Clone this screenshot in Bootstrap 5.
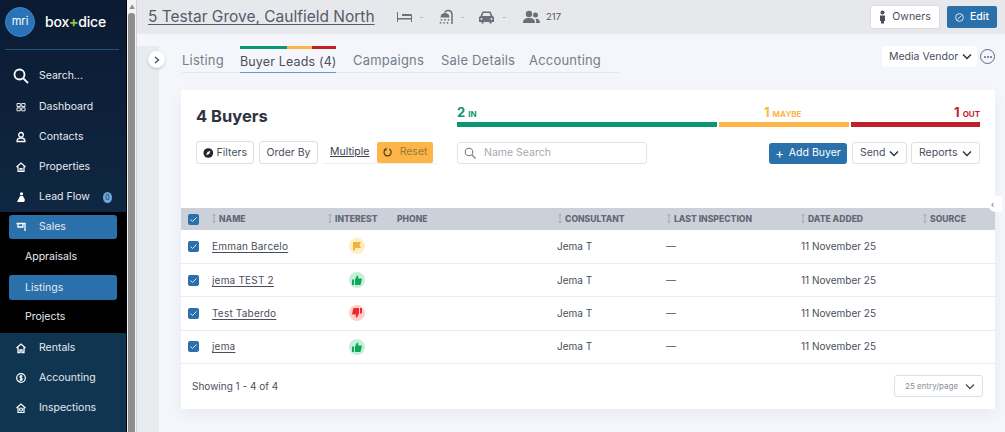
<!DOCTYPE html>
<html lang="en">
<head>
<meta charset="UTF-8">
<meta name="viewport" content="width=device-width, initial-scale=1.0">
<title>Buyer Leads</title>
<link href="https://cdn.jsdelivr.net/npm/bootstrap@5.3.0/dist/css/bootstrap.min.css" rel="stylesheet">
<style>
    html, body { height: 432px; overflow: hidden; }
    body { font-family: Inter, "Liberation Sans", sans-serif; font-size: 10.5px; color: #4a4f5c; background: #f4f6fb; }
    .shell { height: 432px; }
    .side { width: 126px; flex: none; color: #e6e9ef; background: #0b1a33; border-right: 1px solid #000; box-sizing: content-box; white-space: nowrap; }
    .side-top { height: 212px; background: linear-gradient(#0b1a33, #0f2742); }
    .side-mid { height: 121px; background: #000; padding-top: 3px; }
    .side-end { height: 99px; background: #0f3550; }
    .brand { height: 50px; margin: 0 7px 0 5px; padding-top: 7px; border-bottom: 1px solid #24527f; }
    .logo { width: 30px; height: 30px; border-radius: 50%; background: #2a73b8; border: 1px solid #3d86c6; color: #fff; font-size: 11px; line-height: 27px; text-align: center; }
    .brand-name { font-size: 14px; font-weight: 500; color: #fff; margin-left: 10px; letter-spacing: -.2px; }
    .brand-name b { color: #8cc63f; }
    .side-item { height: 30px; padding-left: 16px; gap: 13px; }
    .side-item svg { width: 10px; height: 12px; flex: none; }
    .side-search { height: 32px; margin-top: 10px; padding-left: 13px; gap: 10px; }
    .side-search svg { width: 16px; height: 16px; flex: none; }
    .count-dot { width: 11px; height: 11px; border-radius: 50%; background: #6ea8dc; font-size: 7px; line-height: 11px; text-align: center; color: #234; margin-left: auto; margin-right: 14px; }
    .side-pill { height: 24px; margin: 0 9px; padding-left: 7px; gap: 13px; background: #2a70ab; border-radius: 3px; }
    .side-pill svg { width: 10px; height: 12px; flex: none; }
    .side-sub { height: 36px; padding-left: 25px; }
    .side-sub.last-sub { height: 33px; }
    .side-pill.sub-pill { padding-left: 16px; height: 25px; }
    .scroll-rail { width: 10px; flex: none; background: #f3f3f3; border-right: 1px solid #cfd3d8; padding-left: 1px; }
    .scroll-up { height: 13px; color: #8e8e8e; font-size: 6px; line-height: 13px; text-align: center; }
    .scroll-thumb { width: 7px; height: 419px; background: #8e8e8e; border-radius: 3px 3px 0 0; }
    .main-area { min-width: 0; position: relative; }
    .top-strip { height: 34px; background: #e6e8ec; padding: 0 8px 0 11px; }
    .top-title { font-size: 15.5px; color: #565b68; text-decoration: underline; text-underline-offset: 2px; }
    .top-meta { gap: 7px; margin-left: 21px; color: #777; }
    .top-meta svg { width: 17px; height: 16px; flex: none; }
    .top-meta i { font-style: normal; color: #aaa; margin-right: 6px; font-size: 9px; }
    .top-meta .guests-icon { margin-left: 4px; }
    .top-btn { height: 22px; font-size: 10.5px; padding: 0 8px; border: 0; border-radius: 2px; gap: 6px; }
    .btn-light-owner { background: #fff; color: #4a4f5c; width: 68px; box-shadow: 0 0 2px rgba(0,0,0,.15); }
    .btn-edit { background: #2a70ab; color: #fff; width: 50px; font-weight: 500; }
    .body-wrap { height: 398px; }
    .left-strip { width: 22px; flex: none; margin-top: 12px; background: #e9ecef; }
    .expand-dot { position: absolute; left: 11px; top: 51px; width: 17px; height: 17px; border-radius: 50%; background: #fff; box-shadow: 0 1px 3px rgba(0,0,0,.2); color: #555; }
    .content-col { width: 836px; padding-left: 22px; }
    .tab-line { height: 38px; margin-top: 12px; }
    .tab-set { width: 437px; height: 27px; margin-left: 1px; border-bottom: 1px solid #e3e6ea; gap: 16px; font-size: 13px; letter-spacing: .2px; color: #777d8a; align-items: flex-end; white-space: nowrap; }
    .tab-one { height: 27px; line-height: 31px; position: relative; }
    .tab-on { color: #4a4f5c; border-bottom: 1px solid #5b9bd5; height: 27px; margin-bottom: -1px; margin-right: 1px; width: 96px; font-size: 12.5px; letter-spacing: .15px; }
    .tab-flags { position: absolute; top: 0; left: 0; right: 0; height: 3px; }
    .tab-flags span:nth-child(1) { width: 47px; background: #0b9672; }
    .tab-flags span:nth-child(2) { width: 25px; background: #fdb548; }
    .tab-flags span:nth-child(3) { width: 24px; background: #c01f2c; }
    .vendor-pick { width: 95px; height: 21px; background: #fff; border-radius: 3px; padding: 0 5px 0 7px; font-size: 10.5px; margin-right: 3px; }
    .more-dots { width: 15px; height: 15px; border: 1px solid #5e6a80; border-radius: 50%; color: #5e6a80; gap: 1px; }
    .more-dots span { width: 2px; height: 2px; background: #5e6a80; border-radius: 50%; }
    .sheet { height: 319px; margin-top: 6px; width: 814px; background: #fff; box-shadow: 0 6px 14px rgba(30,50,90,.06); border-radius: 2px; }
    .sheet-top { height: 118px; padding: 15px 15px 0; }
    .sheet-left { width: 261px; }
    .sheet-left h2 { font-size: 16.5px; font-weight: 700; color: #2f3340; margin: 1px 0 15px; line-height: 20px; }
    .sheet-right { width: 523px; }
    .tool-btn { height: 23px; padding: 0 6px; background: #fff; border: 1px solid #dcdfe4; border-radius: 3px; font-size: 10.5px; color: #4a4f5c; gap: 3px; }
    .multi-wrap { width: 114px; margin-left: 5px; padding-left: 7px; border-bottom: 1px solid #eef0f3; }
    .multi-link { color: #3d4150; text-decoration: underline; margin-right: 8px; }
    .reset-btn { width: 56px; height: 21px; background: #fdb548; color: #9a7a3c; border: 0; border-radius: 2px; gap: 7px; font-size: 10.5px; }
    .stat-line { height: 15px; font-size: 13px; font-weight: 700; line-height: 15px; }
    .stat-line small { font-size: 8px; margin-left: 3px; font-weight: 700; }
    .stat-bars { gap: 2px; height: 5px; margin-top: 2px; }
    .stat-green { color: #0b9672; }
    .stat-amber { color: #fdb548; }
    .stat-red { color: #c01f2c; }
    .stat-bars div { height: 5px; }
    .search-box { width: 190px; height: 22px; border: 1px solid #e0e3e8; border-radius: 3px; padding: 0 6px; gap: 8px; color: #a6aab2; font-size: 10.5px; }
    .add-btn { height: 21px; width: 78px; background: #2a70ab; color: #fff; border: 0; border-radius: 3px; gap: 5px; font-size: 10.5px; margin-right: 1px; }
    .chev { width: 10px; height: 7px; flex: none; }
    .buyers-table { table-layout: fixed; width: 814px; margin: 0; font-size: 10px; color: #4a4f5c; }
    .buyers-table th { height: 22px; padding: 0; background: #cbd0d9; color: #636876; font-size: 8.6px; font-weight: 800; text-transform: uppercase; border: 0; vertical-align: middle; white-space: nowrap; }
    .buyers-table td { height: 33.4px; padding: 0; border-bottom: 1px solid #e9ebef; vertical-align: middle; background: #fff; color: #4a4f5c; }
    .sort-mark { width: 6px; height: 11px; margin-right: 2px; vertical-align: -2px; }
    .tick-box { width: 11px; height: 11px; margin-left: 7px; background: #2a70ab; border-radius: 2px; display: block; }
    .tick-box svg { display: block; width: 11px; height: 11px; }
    .person-link { color: #4a4f5c; text-decoration: underline; text-underline-offset: 2px; letter-spacing: .2px; margin-left: 1px; }
    .mood-dot { width: 16px; height: 16px; border-radius: 50%; margin-left: 22px; }
    .mood-dot svg { width: 10px; height: 10px; }
    .mood-amber { background: #fdeec4; }
    .mood-green { background: #c6f0d6; }
    .mood-red { background: #ffcfcc; }
    .date-cell { padding-left: 1px !important; }
    .table-foot { height: 44px; padding: 0 12px 0 11px; font-size: 10px; }
    .page-pick { width: 89px; height: 22px; border: 1px solid #dcdfe4; border-radius: 3px; font-size: 8px; color: #8a8e98; padding: 0 7px 0 10px; white-space: nowrap; }
    .edge-handle { position: absolute; left: 851px; top: 196px; width: 14px; height: 16px; background: #fff; border-radius: 8px 0 0 8px; color: #555; font-size: 8px; line-height: 16px; padding-left: 3px; overflow: hidden; }
</style>
</head>
<body>
<div class="shell d-flex">
    <aside class="side">
        <div class="side-top">
            <div class="brand d-flex align-items-start">
                <div class="logo">mri</div>
                <div class="brand-name" style="line-height:30px">box<b>+</b>dice</div>
            </div>
            <div class="side-search d-flex align-items-center">
                <svg viewBox="0 0 16 16" fill="none" stroke="#fff" stroke-width="1.8"><circle cx="6.5" cy="6.5" r="5"/><path d="M10.3 10.3 15 15"/></svg>
                <span>Search...</span>
            </div>
            <div class="side-item d-flex align-items-center">
                <svg viewBox="0 0 10 12" fill="none" stroke="#e6e9ef"><path d="M1 2.500h3.300v3H1zM5.700 2.500H9v3H5.700zM1 6.800h3.300v3H1zM5.700 6.800H9v3H5.700z"/></svg>
                <span>Dashboard</span>
            </div>
            <div class="side-item d-flex align-items-center">
                <svg viewBox="0 0 10 12" fill="none" stroke="#fff" stroke-width="1.300"><circle cx="5" cy="3.800" r="2.300"/><path d="M1 10.500c0-2.600 1.500-3.500 4-3.500s4 .9 4 3.500z"/></svg>
                <span>Contacts</span>
            </div>
            <div class="side-item d-flex align-items-center">
                <svg viewBox="0 0 10 12" fill="none" stroke="#fff" stroke-width="1.200"><path d="M.5 6 5 2l4.500 4M2 5.500V10.500h6V5.500M4 10.500V7.500h2v3"/></svg>
                <span>Properties</span>
            </div>
            <div class="side-item d-flex align-items-center">
                <svg viewBox="0 0 10 12" fill="#fff"><circle cx="5.500" cy="2.800" r="1.600"/><path d="M4 5h3l2 4-1 2H1l1.500-3z"/></svg>
                <span>Lead Flow</span>
                <span class="count-dot">0</span>
            </div>
        </div>
        <div class="side-mid">
            <div class="side-pill d-flex align-items-center">
                <svg viewBox="0 0 10 12" fill="none" stroke="#fff" stroke-width="1.300"><path d="M.5 2.500h8.500V10M2 2.500V6h5V2.500"/></svg>
                <span>Sales</span>
            </div>
            <div class="side-sub d-flex align-items-center">Appraisals</div>
            <div class="side-pill sub-pill d-flex align-items-center">Listings</div>
            <div class="side-sub last-sub d-flex align-items-center">Projects</div>
        </div>
        <div class="side-end">
            <div class="side-item d-flex align-items-center">
                <svg viewBox="0 0 10 12" fill="none" stroke="#fff" stroke-width="1.300"><path d="M.5 6 5 2l4.500 4M2 5.500V10.500h2V8h2v2.500h2V5.500"/></svg>
                <span>Rentals</span>
            </div>
            <div class="side-item d-flex align-items-center">
                <svg viewBox="0 0 10 12" fill="none" stroke="#fff" stroke-width="1.200"><circle cx="5" cy="6" r="4.300"/><path d="M6.300 4.500C6 3.700 4 3.600 3.900 4.800 3.800 6 6.300 5.800 6.200 7.200 6.100 8.400 4 8.300 3.700 7.500M5 3v6"/></svg>
                <span>Accounting</span>
            </div>
            <div class="side-item d-flex align-items-center">
                <svg viewBox="0 0 10 12" fill="none" stroke="#fff" stroke-width="1.200"><path d="M.5 6 5 2l4.500 4M2 5.500V10.500h6V5.500"/><circle cx="5" cy="7.500" r="1.500"/></svg>
                <span>Inspections</span>
            </div>
        </div>
    </aside>
    <div class="scroll-rail">
        <div class="scroll-up">&#9650;</div>
        <div class="scroll-thumb"></div>
    </div>
    <div class="main-area flex-grow-1">
        <div class="top-strip d-flex align-items-center">
            <span class="top-title">5 Testar Grove, Caulfield North</span>
            <div class="top-meta d-flex align-items-center">
                <svg viewBox="0 0 17 16" fill="#6b7078"><path d="M1 3h1v6h13V7H6V5h8.500c1 0 1.500.6 1.500 1.500V13h-1v-2.500H2V13H1z"/></svg>
                <i>-</i>
                <svg viewBox="0 0 17 16" fill="#6b7078"><path d="M15 15V5.500a4 4 0 0 0-7.500-2" fill="none" stroke="#6b7078" stroke-width="1.500"/><path d="M3.500 8.500a4.500 4.500 0 0 1 9 0z"/><circle cx="4.500" cy="10.800" r=".9"/><circle cx="8" cy="10.800" r=".9"/><circle cx="11.500" cy="10.800" r=".9"/><circle cx="3.500" cy="13.800" r=".9"/><circle cx="7" cy="13.800" r=".9"/><circle cx="10.500" cy="13.800" r=".9"/></svg>
                <i>-</i>
                <svg viewBox="0 0 17 16" fill="#6b7078"><path d="M4.500 2.500h8L14.500 7l1.500 1v5h-2.500v1.500h-2V13h-6v1.500h-2V13H1V8l1.500-1zM5.500 4 4.300 7h8.400l-1.200-3zM3.500 9a1 1 0 1 0 0 2 1 1 0 0 0 0-2zm10 0a1 1 0 1 0 0 2 1 1 0 0 0 0-2z" fill-rule="evenodd"/></svg>
                <i>-</i>
                <svg class="guests-icon" viewBox="0 0 17 16" fill="#6b7078"><circle cx="6" cy="5" r="3.200"/><path d="M0 14c0-4 2.500-5 6-5s6 1 6 5z"/><circle cx="12.500" cy="6" r="2.500"/><path d="M13 14h4c0-3-1.500-4.500-4.500-4.300 1 1 .5 3 .5 4.300z"/></svg>
                <span style="font-size:9.5px;color:#555;margin-left:-1px">217</span>
            </div>
            <div class="ms-auto d-flex gap-2">
                <button class="top-btn btn-light-owner d-flex align-items-center justify-content-center">
                    <svg width="7" height="14" viewBox="0 0 7 14" fill="#4a4f5c"><circle cx="3.500" cy="2.500" r="2"/><path d="M1 5.500h5V11H5v2.500H2V11H1z"/></svg>
                    Owners
                </button>
                <button class="top-btn btn-edit d-flex align-items-center justify-content-center">
                    <svg width="13" height="13" viewBox="0 0 12 12" fill="none" stroke="#fff" stroke-width="1.100"><circle cx="6" cy="6" r="5.200"/><path d="M3.500 8.500 8.500 3.500"/></svg>
                    Edit
                </button>
            </div>
        </div>
        <div class="body-wrap d-flex">
            <div class="left-strip"></div>
            <div class="content-col">
                <div class="tab-line d-flex justify-content-between">
                    <div class="tab-set d-flex">
                        <div class="tab-one" style="width:42px">Listing</div>
                        <div class="tab-one tab-on">
                            <div class="tab-flags d-flex"><span></span><span></span><span></span></div>
                            Buyer Leads (4)
                        </div>
                        <div class="tab-one" style="width:72px">Campaigns</div>
                        <div class="tab-one" style="width:72px">Sale Details</div>
                        <div class="tab-one" style="width:73px">Accounting</div>
                    </div>
                    <div class="d-flex align-items-center" style="height:21px">
                        <div class="vendor-pick d-flex align-items-center justify-content-between">
                            <span>Media Vendor</span>
                            <svg class="chev" viewBox="0 0 10 7" fill="none" stroke="#2f3340" stroke-width="1.500"><path d="m1 1.500 4 4 4-4"/></svg>
                        </div>
                        <div class="more-dots d-flex align-items-center justify-content-center"><span></span><span></span><span></span></div>
                    </div>
                </div>
                <div class="sheet">
                    <div class="sheet-top d-flex justify-content-between">
                        <div class="sheet-left">
                            <h2>4 Buyers</h2>
                            <div class="d-flex align-items-center">
                                <button class="tool-btn d-flex align-items-center" style="width:58px">
                                    <svg width="12" height="12" viewBox="0 0 12 12"><circle cx="6" cy="6" r="5.500" fill="#23262f"/><path d="m3.500 8.500 1.500-3.500 3.500-1.500L7 7z" fill="#fff"/></svg>
                                    Filters
                                </button>
                                <button class="tool-btn justify-content-center" style="width:59px;margin-left:5px">Order By</button>
                                <div class="multi-wrap d-flex align-items-center">
                                    <span class="multi-link">Multiple</span>
                                    <button class="reset-btn d-flex align-items-center justify-content-center">
                                        <svg width="11" height="12" viewBox="0 0 11 12" fill="none" stroke="#4a3a1c" stroke-width="1.400"><path d="M3.500 2.500a4.300 4.300 0 1 0 4 0M3.500 1v2.500H1"/></svg>
                                        Reset
                                    </button>
                                </div>
                            </div>
                        </div>
                        <div class="sheet-right">
                            <div class="stat-line d-flex">
                                <div class="stat-green" style="width:260px">2<small>IN</small></div>
                                <div class="stat-amber" style="width:132px;padding-left:47px">1<small>MAYBE</small></div>
                                <div class="stat-red text-end flex-grow-1">1<small>OUT</small></div>
                            </div>
                            <div class="stat-bars d-flex">
                                <div style="width:260px;background:#0b9672"></div>
                                <div style="width:130px;background:#fdb548"></div>
                                <div class="flex-grow-1" style="background:#c01f2c"></div>
                            </div>
                            <div class="d-flex align-items-center" style="margin-top:15px">
                                <div class="search-box d-flex align-items-center">
                                    <svg width="12" height="12" viewBox="0 0 12 12" fill="none" stroke="#777" stroke-width="1.100"><circle cx="5" cy="5" r="3.800"/><path d="m8 8 3.500 3.500"/></svg>
                                    <span>Name Search</span>
                                </div>
                                <button class="add-btn ms-auto d-flex align-items-center justify-content-center">
                                    <span style="font-size:13px;line-height:1">+</span>Add Buyer
                                </button>
                                <button class="tool-btn ms-1 d-flex align-items-center justify-content-between" style="width:55px;height:22px;padding:0 7px">
                                    Send
                                    <svg class="chev" viewBox="0 0 10 7" fill="none" stroke="#2f3340" stroke-width="1.400"><path d="m1 1.500 4 4 4-4"/></svg>
                                </button>
                                <button class="tool-btn ms-1 d-flex align-items-center justify-content-between" style="width:69px;height:22px;padding:0 7px">
                                    Reports
                                    <svg class="chev" viewBox="0 0 10 7" fill="none" stroke="#2f3340" stroke-width="1.400"><path d="m1 1.500 4 4 4-4"/></svg>
                                </button>
                            </div>
                        </div>
                    </div>
                    <table class="table buyers-table">
                        <colgroup>
                            <col style="width:30px"><col style="width:116px"><col style="width:70px"><col style="width:160px"><col style="width:109px"><col style="width:134px"><col style="width:122px"><col style="width:73px">
                        </colgroup>
                        <thead>
                            <tr>
                                <th><span class="tick-box"><svg viewBox="0 0 11 11" fill="none" stroke="#dfe9f3" stroke-width="1"><path d="m2.500 5.500 2 2 4-4"/></svg></span></th>
                                <th><svg class="sort-mark" viewBox="0 0 6 11" fill="none" stroke="#a4a9b4"><path d="M3 1v9M1.500 2.500 3 1l1.500 1.500M1.500 8.500 3 10l1.500-1.500"/></svg>Name</th>
                                <th><svg class="sort-mark" viewBox="0 0 6 11" fill="none" stroke="#a4a9b4"><path d="M3 1v9M1.500 2.500 3 1l1.500 1.500M1.500 8.500 3 10l1.500-1.500"/></svg>Interest</th>
                                <th>Phone</th>
                                <th><svg class="sort-mark" viewBox="0 0 6 11" fill="none" stroke="#a4a9b4"><path d="M3 1v9M1.500 2.500 3 1l1.500 1.500M1.500 8.500 3 10l1.500-1.500"/></svg>Consultant</th>
                                <th><svg class="sort-mark" viewBox="0 0 6 11" fill="none" stroke="#a4a9b4"><path d="M3 1v9M1.500 2.500 3 1l1.500 1.500M1.500 8.500 3 10l1.500-1.500"/></svg>Last Inspection</th>
                                <th><svg class="sort-mark" viewBox="0 0 6 11" fill="none" stroke="#a4a9b4"><path d="M3 1v9M1.500 2.500 3 1l1.500 1.500M1.500 8.500 3 10l1.500-1.500"/></svg>Date Added</th>
                                <th><svg class="sort-mark" viewBox="0 0 6 11" fill="none" stroke="#a4a9b4"><path d="M3 1v9M1.500 2.500 3 1l1.500 1.500M1.500 8.500 3 10l1.500-1.500"/></svg>Source</th>
                            </tr>
                        </thead>
                        <tbody>
                            <tr>
                                <td><span class="tick-box"><svg viewBox="0 0 11 11" fill="none" stroke="#dfe9f3" stroke-width="1"><path d="m2.500 5.500 2 2 4-4"/></svg></span></td>
                                <td><a class="person-link" href="#">Emman Barcelo</a></td>
                                <td><div class="mood-dot mood-amber d-flex align-items-center justify-content-center"><svg viewBox="0 0 10 10" fill="#f0b43c"><path d="M1 1h8L7.500 4 9 7H3v2.500H1z"/></svg></div></td>
                                <td></td><td>Jema T</td><td>&mdash;</td><td class="date-cell">11 November 25</td><td></td>
                            </tr>
                            <tr>
                                <td><span class="tick-box"><svg viewBox="0 0 11 11" fill="none" stroke="#dfe9f3" stroke-width="1"><path d="m2.500 5.500 2 2 4-4"/></svg></span></td>
                                <td><a class="person-link" href="#">jema TEST 2</a></td>
                                <td><div class="mood-dot mood-green d-flex align-items-center justify-content-center"><svg viewBox="0 0 10 10" fill="#0fa85a"><path d="M0 4.500h2V10H0zM3 4.500 5 .5c1 0 1.500.8 1.200 1.800L6 3.500h3c.8 0 1 .7.800 1.300L8.800 9c-.1.500-.5 1-1.200 1H3z"/></svg></div></td>
                                <td></td><td>Jema T</td><td>&mdash;</td><td class="date-cell">11 November 25</td><td></td>
                            </tr>
                            <tr>
                                <td><span class="tick-box"><svg viewBox="0 0 11 11" fill="none" stroke="#dfe9f3" stroke-width="1"><path d="m2.500 5.500 2 2 4-4"/></svg></span></td>
                                <td><a class="person-link" href="#">Test Taberdo</a></td>
                                <td><div class="mood-dot mood-red d-flex align-items-center justify-content-center"><svg viewBox="0 0 10 10" fill="#f0282d"><path d="M10 5.500H8V0h2zM7 5.500 5 9.500c-1 0-1.500-.8-1.200-1.800L4 6.500H1C.2 6.500 0 5.800.2 5.200L1.200 1C1.300.5 1.700 0 2.400 0H7z"/></svg></div></td>
                                <td></td><td>Jema T</td><td>&mdash;</td><td class="date-cell">11 November 25</td><td></td>
                            </tr>
                            <tr>
                                <td><span class="tick-box"><svg viewBox="0 0 11 11" fill="none" stroke="#dfe9f3" stroke-width="1"><path d="m2.500 5.500 2 2 4-4"/></svg></span></td>
                                <td><a class="person-link" href="#">jema</a></td>
                                <td><div class="mood-dot mood-green d-flex align-items-center justify-content-center"><svg viewBox="0 0 10 10" fill="#0fa85a"><path d="M0 4.500h2V10H0zM3 4.500 5 .5c1 0 1.500.8 1.200 1.800L6 3.500h3c.8 0 1 .7.800 1.300L8.800 9c-.1.500-.5 1-1.200 1H3z"/></svg></div></td>
                                <td></td><td>Jema T</td><td>&mdash;</td><td class="date-cell">11 November 25</td><td></td>
                            </tr>
                        </tbody>
                    </table>
                    <div class="table-foot d-flex align-items-center justify-content-between">
                        <span>Showing 1 - 4 of 4</span>
                        <div class="page-pick d-flex align-items-center justify-content-between">
                            <span>25 entry/page</span>
                            <svg class="chev" viewBox="0 0 10 7" fill="none" stroke="#555" stroke-width="1.400"><path d="m1 1.500 4 4 4-4"/></svg>
                        </div>
                    </div>
                </div>
            </div>
        </div>
        <div class="expand-dot d-flex align-items-center justify-content-center">
            <svg width="6" height="8" viewBox="0 0 6 8" fill="none" stroke="#555" stroke-width="1.400"><path d="m1 1 3.500 3L1 7"/></svg>
        </div>
        <div class="edge-handle">&lsaquo;</div>
    </div>
</div>
<script src="https://cdn.jsdelivr.net/npm/bootstrap@5.3.0/dist/js/bootstrap.bundle.min.js"></script>
</body>
</html>
